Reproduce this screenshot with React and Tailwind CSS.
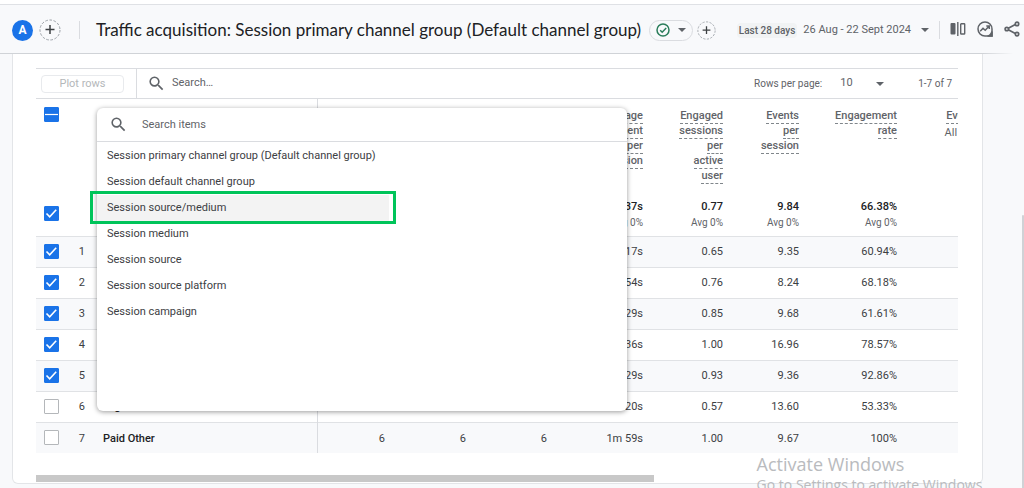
import React from "react";

const columns = [
  { key: "users", head: [], total: "" },
  { key: "sessions", head: [], total: "" },
  { key: "engaged", head: [], total: "" },
  { key: "time", head: ["Average", "engagement", "time per", "session"], total: "1m 37s" },
  { key: "perUser", head: ["Engaged", "sessions", "per", "active", "user"], total: "0.77" },
  { key: "events", head: ["Events", "per", "session"], total: "9.84" },
  { key: "rate", head: ["Engagement", "rate"], total: "66.38%" },
];

const rows = [
  { name: "", checked: true, values: ["", "", "", "1m 17s", "0.65", "9.35", "60.94%"] },
  { name: "", checked: true, values: ["", "", "", "0m 54s", "0.76", "8.24", "68.18%"] },
  { name: "", checked: true, values: ["", "", "", "1m 29s", "0.85", "9.68", "61.61%"] },
  { name: "", checked: true, values: ["", "", "", "1m 36s", "1.00", "16.96", "78.57%"] },
  { name: "", checked: true, values: ["", "", "", "1m 29s", "0.93", "9.36", "92.86%"] },
  { name: "Organic", checked: false, values: ["", "", "", "0m 20s", "0.57", "13.60", "53.33%"] },
  { name: "Paid Other", checked: false, values: ["6", "6", "6", "1m 59s", "1.00", "9.67", "100%"] },
];

const dimensions = [
  "Session primary channel group (Default channel group)",
  "Session default channel group",
  "Session source/medium",
  "Session medium",
  "Session source",
  "Session source platform",
  "Session campaign",
];

function SearchIcon() {
  return (
    <svg viewBox="0 0 24 24" className="size-[19px] shrink-0 fill-[#5f6368]" aria-hidden="true">
      <path d="M15.5 14h-.79l-.28-.27A6.47 6.47 0 0 0 16 9.5 6.5 6.5 0 1 0 9.5 16c1.61 0 3.09-.59 4.23-1.57l.27.28v.79l5 4.99L20.49 19zm-6 0C7.01 14 5 11.99 5 9.5S7.01 5 9.5 5 14 7.01 14 9.5 11.99 14 9.5 14" />
    </svg>
  );
}

function Caret() {
  return (
    <svg viewBox="0 0 8 4" className="pointer-events-none h-1 w-2 shrink-0 fill-[#5f6368]" aria-hidden="true">
      <path d="M0 0h8L4 4z" />
    </svg>
  );
}

function AddButton({ label, size }) {
  return (
    <button type="button" aria-label={label} className="flex shrink-0 items-center justify-center">
      <svg viewBox="0 0 22 22" className={size} fill="none" aria-hidden="true">
        <circle cx="11" cy="11" r="10" stroke="#9aa0a6" strokeWidth="1" strokeDasharray="2.6 1.6" />
        <path d="M11 6v9M6.5 10.5h9" stroke="#3c4043" strokeWidth="1.5" />
      </svg>
    </button>
  );
}

function Checkbox({ label, checked, mixed }) {
  return (
    <label className="relative flex size-[15px]">
      <input
        type="checkbox"
        aria-label={label}
        defaultChecked={checked}
        className="size-[15px] appearance-none rounded-[1px] border border-[#b4b7ba] bg-white checked:border-[#1a73e8] checked:bg-[#1a73e8]"
      />
      {checked && (
        <svg viewBox="0 0 15 15" className="pointer-events-none absolute inset-0 size-[15px]" fill="none" aria-hidden="true">
          <path d={mixed ? "M1 7.5h13" : "M2.5 7.5l3.2 3.3 6.5-7"} stroke="#fff" strokeWidth={mixed ? 1.2 : 1.6} />
        </svg>
      )}
    </label>
  );
}

function Header() {
  return (
    <header className="mt-1 border-t border-[#dfe1e5] bg-[#f8f9fb]">
      <div className="flex h-12 items-center pt-0.5 pr-1 pl-3">
        <span className="flex size-[21px] shrink-0 items-center justify-center rounded-full bg-[#1a73e8] text-xs font-bold text-white">A</span>
        <span className="ml-1.5 flex"><AddButton label="Add comparison" size="size-[22px]" /></span>
        <span className="ml-[18px] h-[18px] w-px shrink-0 bg-[#dadce0]" />
        <h1 className="ml-4 font-[Lato,Roboto,sans-serif] text-[17px] whitespace-nowrap text-[#202124]">
          Traffic acquisition: Session primary channel group (Default channel group)
        </h1>
        <button type="button" aria-label="Report status" className="ml-2 flex h-[21px] shrink-0 items-center gap-2 rounded-full border border-[#dadce0] px-1.5">
          <svg viewBox="0 0 14 14" className="size-3.5" fill="none" stroke="#2b7d5b" strokeWidth="1.5" aria-hidden="true">
            <circle cx="7" cy="7" r="6" />
            <path d="M4.2 7.2l2 2 4-4.2" />
          </svg>
          <Caret />
        </button>
        <span className="ml-1 flex"><AddButton label="Add filter" size="size-[19px]" /></span>
        <button type="button" className="ml-auto flex shrink-0 items-center gap-1.5 text-[11px] whitespace-nowrap text-[#5f6368]">
          <span className="rounded-sm bg-[#f1f3f4] px-0.5 text-[10px] font-medium">Last 28 days</span>
          <span>26 Aug - 22 Sept 2024</span>
          <span className="ml-1"><Caret /></span>
        </button>
        <span className="ml-2.5 h-[18px] w-px shrink-0 bg-[#dadce0]" />
        <div className="ml-2.5 flex shrink-0 items-center gap-[11px] pb-0.5">
          <button type="button" aria-label="Customize comparison">
            <svg viewBox="0 0 16 16" className="size-4" fill="none" stroke="#5f6368" strokeWidth="1.4" aria-hidden="true">
              <rect x="0.5" y="2" width="5" height="11.5" rx="1" fill="#5f6368" stroke="none" />
              <path d="M7.8 1v14" />
              <rect x="10.7" y="2.7" width="4" height="10.3" rx="0.6" />
            </svg>
          </button>
          <button type="button" aria-label="Insights">
            <svg viewBox="0 0 16 16" className="size-4" fill="none" stroke="#5f6368" strokeWidth="1.5" aria-hidden="true">
              <path d="M8 1a7 7 0 1 0 0 14h7V8a7 7 0 0 0-7-7z" />
              <path d="M3.2 10.2l2.800-2.900 2.200 2 3.800-4M9.300 5h3v3" />
              <path d="M15 10.500V15h-4.500c2 0 3.600-2.200 4.500-4.500z" fill="#5f6368" />
            </svg>
          </button>
          <button type="button" aria-label="Share">
            <svg viewBox="0 0 16 16" className="size-4" fill="none" stroke="#5f6368" strokeWidth="1.7" aria-hidden="true">
              <path d="M4.300 7.200l7-3.700M4.300 8.800l7 3.700" />
              <circle cx="13" cy="2.900" r="1.700" />
              <circle cx="2.800" cy="8" r="1.700" />
              <circle cx="13" cy="13.100" r="1.700" />
            </svg>
          </button>
        </div>
      </div>
      <div className="h-px bg-linear-to-r from-[#d0d3d7] from-96% to-[#f8f9fb] to-99%" />
    </header>
  );
}

function Toolbar() {
  return (
    <div className="flex h-[31px] items-center border-y border-[#dadce0] text-[11px] text-[#5f6368]">
      <div className="flex h-full items-center border-r border-[#dadce0] pr-3 pl-[5px]">
        <button type="button" disabled className="h-[18px] w-[83px] rounded-sm border border-[#e8eaed] leading-4 text-[#b4b7ba]">Plot rows</button>
      </div>
      <label className="flex min-w-0 flex-1 items-center gap-1.5 pl-2.5">
        <SearchIcon />
        <input type="text" aria-label="Search" placeholder="Search…" className="min-w-0 flex-1 outline-none placeholder:text-[#5f6368]" />
      </label>
      <label htmlFor="page-size" className="text-[10px]">Rows per page:</label>
      <span className="ml-[18px] flex items-center">
        <select id="page-size" className="w-9 appearance-none bg-transparent outline-none">
          <option>10</option>
        </select>
        <Caret />
      </span>
      <span className="mr-1.5 ml-[34px] text-[10px]">1-7 of 7</span>
    </div>
  );
}

function Heading({ words }) {
  return words.map((word) => (
    <span key={word} className="ml-auto block w-fit border-b border-dashed border-[#80868b] leading-[14px]">{word}</span>
  ));
}

function DataTable() {
  return (
    <div className="overflow-hidden">
      <table className="w-[987px] table-fixed border-collapse text-right text-[11px] text-[#3c4043]">
        <colgroup>
          <col className="w-9" />
          <col className="w-[25px]" />
          <col className="w-[220px]" />
          <col className="w-[84px]" />
          <col className="w-[81px]" />
          <col className="w-[81px]" />
          <col className="w-24" />
          <col className="w-20" />
          <col className="w-[76px]" />
          <col className="w-[98px]" />
          <col className="w-[110px]" />
        </colgroup>
        <thead className="font-medium text-[#5f6368]">
          <tr className="h-[99px] align-top">
            <th className="pt-2 pl-2"><Checkbox label="Select all rows" checked mixed /></th>
            <th />
            <th className="border-r border-[#dadce0]" />
            {columns.map((c) => (
              <th key={c.key} className="pt-2.5 pr-4 font-medium"><Heading words={c.head} /></th>
            ))}
            <th className="pt-2.5 pr-[19px] font-medium">
              <Heading words={["Event count"]} />
              <button type="button" className="ml-auto flex h-[18px] items-center gap-1 font-normal whitespace-nowrap">
                All events <Caret />
              </button>
            </th>
          </tr>
        </thead>
        <tbody>
          <tr className="h-[38px] align-top">
            <td className="pt-2 pl-2"><Checkbox label="Select totals" checked /></td>
            <td />
            <td className="border-r border-[#dadce0]" />
            {columns.map((c) => (
              <td key={c.key} className="pt-px pr-4">
                <span className="block leading-4 font-medium text-[#202124]">{c.total}</span>
                {c.total && <span className="block text-[10px] leading-4 text-[#5f6368]">Avg 0%</span>}
              </td>
            ))}
            <td />
          </tr>
          {rows.map((row, i) => (
            <tr key={i} className="h-[31px] border-t border-[#e0e2e5] odd:bg-white even:bg-[#f8f9fb]">
              <td className="pl-2"><Checkbox label={`Select row ${i + 1}`} checked={row.checked} /></td>
              <td className="pt-0.5 pr-3">{i + 1}</td>
              <td className="border-r border-[#dadce0] pt-0.5 pl-1.5 text-left font-medium text-[#202124]">{row.name}</td>
              {row.values.map((value, n) => (
                <td key={n} className="pt-0.5 pr-4">{value}</td>
              ))}
              <td />
            </tr>
          ))}
        </tbody>
      </table>
    </div>
  );
}

function DimensionMenu() {
  return (
    <div className="absolute top-[9px] left-[61px] h-[303px] w-[530px] rounded-md bg-white shadow-[0_1px_5px_rgba(0,0,0,0.4)]">
      <label className="flex h-[34px] items-center gap-3.5 border-b border-[#dadce0] pl-3">
        <SearchIcon />
        <input type="text" aria-label="Search items" placeholder="Search items" className="min-w-0 flex-1 pt-0.5 text-[11px] outline-none placeholder:text-[#5f6368]" />
      </label>
      <ul className="pt-px">
        {dimensions.map((name, i) => (
          <li key={name} className="relative">
            <button type="button" className={`flex h-[26px] items-center pl-2.5 text-[11px] text-[#3c4043] ${i === 2 ? "w-[292px] bg-[#f3f3f3]" : "w-full"}`}>
              {name}
            </button>
            {i === 2 && <span className="pointer-events-none absolute -top-1 -left-[7px] h-[33px] w-[306px] border-[3px] border-[#00c45a]" />}
          </li>
        ))}
      </ul>
    </div>
  );
}

export default function App() {
  return (
    <div className="relative h-screen overflow-hidden bg-white font-[Roboto,'Liberation_Sans',sans-serif]">
      <Header />
      <main className="min-h-full bg-[#f8f9fb] pr-[41px] pl-3">
        <section className="rounded-b-md border border-t-0 border-[#e3e5e8] bg-white pt-3.5 pr-6 pb-px pl-[23px]">
          <Toolbar />
          <div className="relative">
            <DataTable />
            <DimensionMenu />
          </div>
          <div className="mt-[22px]">
            <div className="h-[7px] w-[67%] bg-[#c8c8c8]" />
          </div>
        </section>
      </main>
      <div className="absolute top-[215px] right-0 bottom-0 w-0.5 rounded-t-sm bg-[#d0d2d6]" />
      <div className="pointer-events-none absolute top-[452px] right-[38px] font-['Open_Sans',sans-serif] whitespace-nowrap text-[#b9bbbe]">
        <p className="text-lg leading-6">Activate Windows</p>
        <p className="text-[14px] leading-[18px]">Go to Settings to activate Windows.</p>
      </div>
    </div>
  );
}
